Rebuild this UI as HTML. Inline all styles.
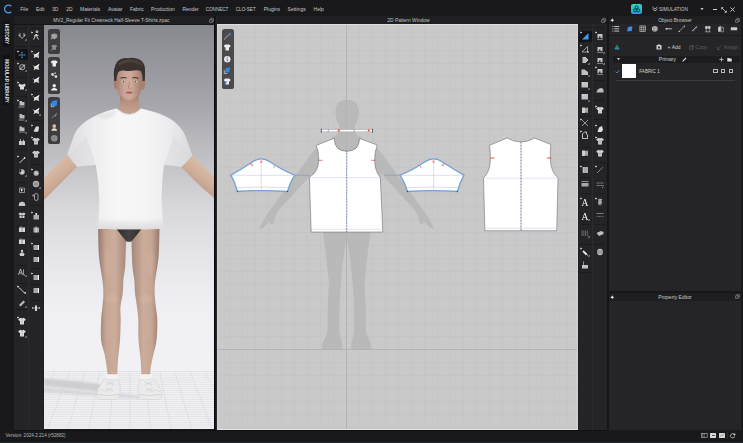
<!DOCTYPE html>
<html><head><meta charset="utf-8">
<style>
*{margin:0;padding:0;box-sizing:border-box}
html,body{width:743px;height:443px;overflow:hidden;background:#19191b;font-family:"Liberation Sans",sans-serif;color:#d8d8d8}
.a{position:absolute}
.t{position:absolute;white-space:nowrap;font-size:5px;line-height:6px;color:#c8c8c8}
svg{position:absolute;overflow:visible}
</style></head><body>
<div class="a" style="left:0;top:0;width:743px;height:16px;background:#19191b"></div>
<svg style="left:3px;top:4px" width="10" height="10" viewBox="0 0 10 10"><path d="M8.3 2.3 A3.9 3.9 0 1 0 8.3 7.7" fill="none" stroke="#4a9de6" stroke-width="1.3"/></svg>
<div class="t" style="left:20.2px;top:6px;font-size:5px;color:#c8c8c8">File</div>
<div class="t" style="left:35.9px;top:6px;font-size:5px;color:#c8c8c8">Edit</div>
<div class="t" style="left:52px;top:6px;font-size:5px;color:#c8c8c8">3D</div>
<div class="t" style="left:66.2px;top:6px;font-size:5px;color:#c8c8c8">2D</div>
<div class="t" style="left:80px;top:6px;font-size:5px;color:#c8c8c8">Materials</div>
<div class="t" style="left:108.1px;top:6px;font-size:5px;color:#c8c8c8">Avatar</div>
<div class="t" style="left:129.9px;top:6px;font-size:5px;color:#c8c8c8">Fabric</div>
<div class="t" style="left:150.9px;top:6px;font-size:5px;color:#c8c8c8">Production</div>
<div class="t" style="left:182.4px;top:6px;font-size:5px;color:#c8c8c8">Render</div>
<div class="t" style="left:205.7px;top:6.75px;font-size:4.6px;color:#c8c8c8">CONNECT</div>
<div class="t" style="left:235.8px;top:6.75px;font-size:4.6px;color:#c8c8c8">CLO-SET</div>
<div class="t" style="left:263.7px;top:6px;font-size:5px;color:#c8c8c8">Plugins</div>
<div class="t" style="left:287.6px;top:6px;font-size:5px;color:#c8c8c8">Settings</div>
<div class="t" style="left:313.6px;top:6px;font-size:5px;color:#c8c8c8">Help</div>
<div class="a" style="left:631px;top:4px;width:11.3px;height:10px;border-radius:2px;background:linear-gradient(#33d9b8,#1c9ee6)"></div>
<svg style="left:631px;top:4px" width="11" height="10" viewBox="0 0 11 10"><g fill="none" stroke="#0d2a3a" stroke-width="0.9"><circle cx="5.6" cy="3.3" r="1.5"/><circle cx="4" cy="6.3" r="1.5"/><circle cx="7.2" cy="6.3" r="1.5"/></g></svg>
<svg style="left:652px;top:6px" width="6" height="6" viewBox="0 0 6 6"><path d="M0.5 1 L3 3 L5.5 1 M0.5 3 L3 5 L5.5 3" fill="none" stroke="#bbb" stroke-width="0.9"/></svg>
<div class="t" style="left:659px;top:6.6px;font-size:4.8px;color:#c8c8c8">SIMULATION</div>
<svg style="left:700px;top:8.2px" width="4" height="3" viewBox="0 0 4 3"><path d="M0.3 0 H3.7 L2 2.3Z" fill="#bbb"/></svg>
<div class="a" style="left:712.5px;top:8.8px;width:4.5px;height:0.9px;background:#d0d0d0"></div>
<svg style="left:721px;top:6.5px" width="6" height="6" viewBox="0 0 6 6"><path d="M0.6 0.6 L5.4 5.4 M0.6 0.6 h1.8 M0.6 0.6 v1.8 M5.4 5.4 h-1.8 M5.4 5.4 v-1.8" fill="none" stroke="#ccc" stroke-width="0.8"/></svg>
<svg style="left:730px;top:7px" width="5" height="5" viewBox="0 0 5 5"><path d="M0.4 0.4 L4.6 4.6 M4.6 0.4 L0.4 4.6" fill="none" stroke="#d0d0d0" stroke-width="0.9"/></svg>
<div class="a" style="left:0;top:16px;width:14px;height:414px;background:#19191b"></div>
<div class="a" style="left:3px;top:21px;width:7px;height:26px;background:#111113"></div>
<div class="a" style="left:3px;top:55px;width:7px;height:50px;background:#111113"></div>
<div class="t" style="left:6.0px;top:34px;font-size:4.6px;line-height:5px;font-weight:bold;transform:translate(-50%,-50%) rotate(90deg);color:#e0e0e0">HISTORY</div>
<div class="t" style="left:6.0px;top:80.5px;font-size:4.6px;line-height:5px;font-weight:bold;transform:translate(-50%,-50%) rotate(90deg) scaleX(0.965);color:#e0e0e0">MODULAR LIBRARY</div>
<div class="a" style="left:14px;top:16px;width:200px;height:8px;background:#1f1f21"></div>
<div class="a" style="left:14px;top:24px;width:200px;height:1px;background:#141416"></div>
<div class="a" style="left:217px;top:23px;width:361px;height:1px;background:#141416"></div>
<div class="t" style="left:53.2px;top:18.2px;font-size:4.9px;color:#c4c4c4">MV2_Regular Fit Crewneck Half-Sleeve T-Shirts.zpac</div>
<svg style="left:208.5px;top:18.2px" width="5" height="5" viewBox="0 0 5 5"><path d="M0.6 1.8 H3.2 V4.4 H0.6Z M1.8 1.8 V0.6 H4.4 V3.2 H3.2" fill="none" stroke="#a8a8a8" stroke-width="0.55"/></svg>
<div class="a" style="left:14px;top:25px;width:30px;height:405px;background:#242427"></div>
<div class="a" style="left:28px;top:25px;width:1px;height:405px;background:#2b2b2d"></div><div class="a" style="left:43px;top:25px;width:1px;height:405px;background:#1e1e20"></div>
<div class="a" style="left:15.5px;top:28px;width:11px;height:0.6px;background:#1b1b1d"></div>
<div class="a" style="left:15.5px;top:46px;width:11px;height:0.6px;background:#1b1b1d"></div>
<div class="a" style="left:15.5px;top:76.8px;width:11px;height:0.6px;background:#1b1b1d"></div>
<div class="a" style="left:15.5px;top:95.8px;width:11px;height:0.6px;background:#1b1b1d"></div>
<div class="a" style="left:15.5px;top:149px;width:11px;height:0.6px;background:#1b1b1d"></div>
<div class="a" style="left:15.5px;top:182px;width:11px;height:0.6px;background:#1b1b1d"></div>
<div class="a" style="left:15.5px;top:265px;width:11px;height:0.6px;background:#1b1b1d"></div>
<div class="a" style="left:15.5px;top:283px;width:11px;height:0.6px;background:#1b1b1d"></div>
<div class="a" style="left:15.5px;top:309px;width:11px;height:0.6px;background:#1b1b1d"></div>
<div class="a" style="left:30.5px;top:28px;width:11px;height:0.6px;background:#1b1b1d"></div>
<div class="a" style="left:30.5px;top:46px;width:11px;height:0.6px;background:#1b1b1d"></div>
<div class="a" style="left:30.5px;top:89.7px;width:11px;height:0.6px;background:#1b1b1d"></div>
<div class="a" style="left:30.5px;top:120.2px;width:11px;height:0.6px;background:#1b1b1d"></div>
<div class="a" style="left:30.5px;top:164px;width:11px;height:0.6px;background:#1b1b1d"></div>
<div class="a" style="left:30.5px;top:205px;width:11px;height:0.6px;background:#1b1b1d"></div>
<div class="a" style="left:30.5px;top:236px;width:11px;height:0.6px;background:#1b1b1d"></div>
<div class="a" style="left:30.5px;top:250px;width:11px;height:0.6px;background:#1b1b1d"></div>
<div class="a" style="left:30.5px;top:268px;width:11px;height:0.6px;background:#1b1b1d"></div>
<div class="a" style="left:30.5px;top:284px;width:11px;height:0.6px;background:#1b1b1d"></div>
<div class="a" style="left:30.5px;top:300px;width:11px;height:0.6px;background:#1b1b1d"></div>
<div class="a" style="left:15.2px;top:49.4px;width:12.6px;height:10.8px;border-radius:1.5px;background:#131315"></div>
<svg style="left:16.50px;top:31.40px;filter:brightness(1.22)" width="10" height="10" viewBox="0 0 10 10"><path d="M3 2 V5 L1.6 4 M7 2 V5 L8.4 4 M1.8 4.2 L5 7.4 L8.2 4.2" fill="none" stroke="#bdbdbd" stroke-width="0.7"/><path d="M9.5 8 V9.5 H8 Z" fill="#d0d0d0"/></svg>
<svg style="left:16.50px;top:49.50px;filter:brightness(1.22)" width="10" height="10" viewBox="0 0 10 10"><path d="M5 2 V8 M2 5 H8" stroke="#3a8fe0" stroke-width="0.6"/><path d="M5 1.4 L4.2 2.4 H5.8Z M5 8.6 L4.2 7.6 H5.8Z M1.4 5 L2.4 4.2 V5.8Z M8.6 5 L7.6 4.2 V5.8Z" fill="#3a8fe0"/><path d="M0.4 0.4 L2.2 1.4 L0.4 2.4 Z" fill="#e0e0e0"/></svg>
<svg style="left:16.50px;top:62.00px;filter:brightness(1.22)" width="10" height="10" viewBox="0 0 10 10"><circle cx="5.2" cy="5.2" r="2.6" fill="none" stroke="#bbb" stroke-width="0.7"/><path d="M3 7.5 L8 2.5" stroke="#ddd" stroke-width="0.8"/><path d="M0.4 0.4 L2.2 1.4 L0.4 2.4 Z" fill="#e0e0e0"/><path d="M9.5 8 V9.5 H8 Z" fill="#d0d0d0"/></svg>
<svg style="left:16.50px;top:81.30px;filter:brightness(1.22)" width="10" height="10" viewBox="0 0 10 10"><path d="M2 2.5 L4 3.5 H6 L8 2.5 L8.5 5 L7 6 V8.5 H3 V6 L1.5 5 Z" fill="#b4b4b4"/><path d="M0.4 0.4 L2.2 1.4 L0.4 2.4 Z" fill="#e0e0e0"/><path d="M9.5 8 V9.5 H8 Z" fill="#d0d0d0"/></svg>
<svg style="left:16.50px;top:98.90px;filter:brightness(1.22)" width="10" height="10" viewBox="0 0 10 10"><path d="M2.5 2 H5 V3 H7.5 V6.5 H2.5 Z" fill="#9a9a9a"/><path d="M1.5 8 H7.5" stroke="#ddd" stroke-width="0.5"/><path d="M0.4 0.4 L2.2 1.4 L0.4 2.4 Z" fill="#e0e0e0"/></svg>
<svg style="left:16.50px;top:111.80px;filter:brightness(1.22)" width="10" height="10" viewBox="0 0 10 10"><path d="M2.5 2 H5 V3 H7.5 V6.5 H2.5 Z" fill="#9a9a9a"/><path d="M1.5 8 H7.5" stroke="#ddd" stroke-width="0.5"/><path d="M9.5 8 V9.5 H8 Z" fill="#d0d0d0"/></svg>
<svg style="left:16.50px;top:123.70px;filter:brightness(1.22)" width="10" height="10" viewBox="0 0 10 10"><path d="M2.5 2.5 H5 V3.5 H7.5 V7 H2.5 Z" fill="#9a9a9a"/><path d="M2 8 H8" stroke="#ccc" stroke-width="0.5"/><path d="M9.5 8 V9.5 H8 Z" fill="#d0d0d0"/></svg>
<svg style="left:16.50px;top:137.00px;filter:brightness(1.22)" width="10" height="10" viewBox="0 0 10 10"><path d="M2 4 H8 V8 H2Z" fill="#aaa"/><path d="M3.5 2 V4 M6.5 2.5 V4" stroke="#ccc" stroke-width="0.6"/><path d="M5 4 V8" stroke="#555" stroke-width="0.5"/></svg>
<svg style="left:16.50px;top:154.80px;filter:brightness(1.22)" width="10" height="10" viewBox="0 0 10 10"><path d="M2.5 8 L7.5 3" stroke="#ccc" stroke-width="0.8"/><circle cx="7.6" cy="2.9" r="0.8" fill="#ddd"/><path d="M0.4 0.4 L2.2 1.4 L0.4 2.4 Z" fill="#e0e0e0"/></svg>
<svg style="left:16.50px;top:166.80px;filter:brightness(1.22)" width="10" height="10" viewBox="0 0 10 10"><circle cx="5" cy="5" r="2.7" fill="#999"/><path d="M2.5 3 L6 6" stroke="#ddd" stroke-width="0.9"/><circle cx="3.3" cy="4" r="1.2" fill="#222"/><path d="M9.5 8 V9.5 H8 Z" fill="#d0d0d0"/></svg>
<svg style="left:16.50px;top:185.00px;filter:brightness(1.22)" width="10" height="10" viewBox="0 0 10 10"><path d="M2.5 3 H7.5 V7.5 H2.5Z" fill="none" stroke="#aaa" stroke-width="0.6"/><path d="M3.5 3.5 L6.5 5 L5 5.5 L4.5 7Z" fill="#ddd"/></svg>
<svg style="left:16.50px;top:198.00px;filter:brightness(1.22)" width="10" height="10" viewBox="0 0 10 10"><path d="M1.5 8 H8.5 L7.5 4.5 L5 3.5 L2.5 4.5 Z" fill="#9d9d9d"/><path d="M2 6.2 H8" stroke="#ccc" stroke-width="0.4"/></svg>
<svg style="left:16.50px;top:209.60px;filter:brightness(1.22)" width="10" height="10" viewBox="0 0 10 10"><path d="M1.5 3.5 L3.5 2.5 L5 3.5 L6.5 2.5 L8.5 3.5 L7.5 5 H2.5Z M2.5 5.5 H4.7 V8 H2.5Z M5.3 5.5 H7.5 V8 H5.3Z" fill="#a8a8a8"/></svg>
<svg style="left:16.50px;top:223.80px;filter:brightness(1.22)" width="10" height="10" viewBox="0 0 10 10"><path d="M2 3.5 H8 V8 H2Z" fill="#b0b0b0"/><path d="M5 3.5 V8" stroke="#444" stroke-width="0.5"/><path d="M4 2 V3.5" stroke="#ccc" stroke-width="0.5"/></svg>
<svg style="left:16.50px;top:236.00px;filter:brightness(1.22)" width="10" height="10" viewBox="0 0 10 10"><path d="M2 3.5 H8 V8 H2Z" fill="#b0b0b0"/><path d="M5 3.5 V8" stroke="#444" stroke-width="0.5"/><path d="M4 2 V3.5" stroke="#ccc" stroke-width="0.5"/></svg>
<svg style="left:16.50px;top:247.60px;filter:brightness(1.22)" width="10" height="10" viewBox="0 0 10 10"><circle cx="5" cy="3" r="1.2" fill="#a8a8a8"/><path d="M1.5 7 L4 4.5 H6 L8.5 7 L7 6.5 V8 H3 V6.5Z" fill="#a8a8a8"/></svg>
<svg style="left:16.50px;top:267.30px;filter:brightness(1.22)" width="10" height="10" viewBox="0 0 10 10"><path d="M1.5 8 L3.5 2 L5.5 8 M2.3 6 H4.7" fill="none" stroke="#aaa" stroke-width="0.8"/><path d="M6.5 2.5 V7.5 Q6.5 8.5 8 8" fill="none" stroke="#aaa" stroke-width="0.7"/><path d="M9.5 8 V9.5 H8 Z" fill="#d0d0d0"/></svg>
<svg style="left:16.50px;top:284.50px;filter:brightness(1.22)" width="10" height="10" viewBox="0 0 10 10"><path d="M1.5 2.5 Q5 4.5 5.5 6 Q6 7.5 8.5 8" fill="none" stroke="#bbb" stroke-width="0.8"/><circle cx="8.3" cy="8" r="0.8" fill="#ccc"/><path d="M0.4 0.4 L2.2 1.4 L0.4 2.4 Z" fill="#e0e0e0"/></svg>
<svg style="left:16.50px;top:298.00px;filter:brightness(1.22)" width="10" height="10" viewBox="0 0 10 10"><path d="M2 7 L6.5 2.5 L8 4 L3.5 8.5Z" fill="#9a9a9a"/><path d="M9.5 8 V9.5 H8 Z" fill="#d0d0d0"/></svg>
<svg style="left:16.50px;top:315.50px;filter:brightness(1.22)" width="10" height="10" viewBox="0 0 10 10"><path d="M1.2 3.2 L3.5 1.8 Q5 2.8 6.5 1.8 L8.8 3.2 L7.8 5 L7 4.6 V8.5 H3 V4.6 L2.2 5Z" fill="#b5b5b5"/><path d="M5 3 V8.5" stroke="#777" stroke-width="0.4"/><path d="M0.4 0.4 L2.2 1.4 L0.4 2.4 Z" fill="#e0e0e0"/></svg>
<svg style="left:16.50px;top:328.40px;filter:brightness(1.22)" width="10" height="10" viewBox="0 0 10 10"><path d="M1.2 3.2 L3.5 1.8 Q5 2.8 6.5 1.8 L8.8 3.2 L7.8 5 L7 4.6 V8.5 H3 V4.6 L2.2 5Z" fill="#b5b5b5"/><path d="M5 3 V8.5" stroke="#777" stroke-width="0.4"/><path d="M9.5 8 V9.5 H8 Z" fill="#d0d0d0"/></svg>
<svg style="left:31.30px;top:31.40px;filter:brightness(1.22)" width="10" height="10" viewBox="0 0 10 10"><path d="M6 1.5 a0.9 0.9 0 1 1 0.01 0Z M5.5 3 L4 5.5 L2.5 8.5 M5.5 3 L6 6 L7.5 8.5 M4.5 4 L7.5 4.5 M5 4 L3 5" fill="none" stroke="#b8b8b8" stroke-width="0.9"/><path d="M0.4 0.4 L2.2 1.4 L0.4 2.4 Z" fill="#e0e0e0"/></svg>
<svg style="left:31.30px;top:49.50px;filter:brightness(1.22)" width="10" height="10" viewBox="0 0 10 10"><path d="M1.5 3 L4 4.5 L8.5 1.8 L7.5 5 L8.2 8 L5 7 L2.5 8.2 L3.5 5.5 Z" fill="#b0b0b0"/><path d="M3 6 L8 2.5" stroke="#eee" stroke-width="0.6"/><path d="M0.4 0.4 L2.2 1.4 L0.4 2.4 Z" fill="#e0e0e0"/></svg>
<svg style="left:31.30px;top:62.00px;filter:brightness(1.22)" width="10" height="10" viewBox="0 0 10 10"><path d="M1.5 3 L4 4.5 L8.5 1.8 L7.5 5 L8.2 8 L5 7 L2.5 8.2 L3.5 5.5 Z" fill="#b0b0b0"/><path d="M3 6 L8 2.5" stroke="#eee" stroke-width="0.6"/></svg>
<svg style="left:31.30px;top:74.50px;filter:brightness(1.22)" width="10" height="10" viewBox="0 0 10 10"><path d="M1.5 3 L4 4.5 L8.5 1.8 L7.5 5 L8.2 8 L5 7 L2.5 8.2 L3.5 5.5 Z" fill="#b0b0b0"/><path d="M3 6 L8 2.5" stroke="#eee" stroke-width="0.6"/></svg>
<svg style="left:31.30px;top:92.80px;filter:brightness(1.22)" width="10" height="10" viewBox="0 0 10 10"><path d="M1.5 3 L4 4.5 L8.5 1.8 L7.5 5 L8.2 8 L5 7 L2.5 8.2 L3.5 5.5 Z" fill="#b0b0b0"/><path d="M3 6 L8 2.5" stroke="#eee" stroke-width="0.6"/><path d="M0.4 0.4 L2.2 1.4 L0.4 2.4 Z" fill="#e0e0e0"/></svg>
<svg style="left:31.30px;top:105.70px;filter:brightness(1.22)" width="10" height="10" viewBox="0 0 10 10"><path d="M1.5 3 L4 4.5 L8.5 1.8 L7.5 5 L8.2 8 L5 7 L2.5 8.2 L3.5 5.5 Z" fill="#b0b0b0"/><path d="M3 6 L8 2.5" stroke="#eee" stroke-width="0.6"/><path d="M9.5 8 V9.5 H8 Z" fill="#d0d0d0"/></svg>
<svg style="left:31.30px;top:123.50px;filter:brightness(1.22)" width="10" height="10" viewBox="0 0 10 10"><path d="M2.5 7.5 L5 2.5 L8 2.5 L7.5 7 L6 8 Z" fill="#b0b0b0"/><path d="M0.4 0.4 L2.2 1.4 L0.4 2.4 Z" fill="#e0e0e0"/></svg>
<svg style="left:31.30px;top:136.30px;filter:brightness(1.22)" width="10" height="10" viewBox="0 0 10 10"><path d="M1.2 3.2 L3.5 1.8 Q5 2.8 6.5 1.8 L8.8 3.2 L7.8 5 L7 4.6 V8.5 H3 V4.6 L2.2 5Z" fill="#a9a9a9"/><path d="M3 4.5 L7 7.5 M7 4.5 L3 7.5" stroke="#777" stroke-width="0.5"/><path d="M0.4 0.4 L2.2 1.4 L0.4 2.4 Z" fill="#e0e0e0"/></svg>
<svg style="left:31.30px;top:148.50px;filter:brightness(1.22)" width="10" height="10" viewBox="0 0 10 10"><path d="M1.2 3.2 L3.5 1.8 Q5 2.8 6.5 1.8 L8.8 3.2 L7.8 5 L7 4.6 V8.5 H3 V4.6 L2.2 5Z" fill="#a9a9a9"/><path d="M3 4.5 L7 7.5 M7 4.5 L3 7.5" stroke="#777" stroke-width="0.5"/></svg>
<svg style="left:31.30px;top:167.50px;filter:brightness(1.22)" width="10" height="10" viewBox="0 0 10 10"><circle cx="5.2" cy="5.2" r="2.6" fill="#8a8a8a"/><circle cx="5.2" cy="5.2" r="1.2" fill="#aaa"/><path d="M0.4 0.4 L2.2 1.4 L0.4 2.4 Z" fill="#e0e0e0"/></svg>
<svg style="left:31.30px;top:179.00px;filter:brightness(1.22)" width="10" height="10" viewBox="0 0 10 10"><circle cx="5" cy="5" r="3.2" fill="#8f8f8f"/><path d="M3 4.2 H7 M3 5.8 H7" stroke="#444" stroke-width="0.5"/><path d="M9.5 8 V9.5 H8 Z" fill="#d0d0d0"/></svg>
<svg style="left:31.30px;top:192.00px;filter:brightness(1.22)" width="10" height="10" viewBox="0 0 10 10"><rect x="3.5" y="1.5" width="3.5" height="7" rx="1.6" fill="none" stroke="#aaa" stroke-width="0.7"/><circle cx="2.2" cy="3.5" r="0.9" fill="#888"/></svg>
<svg style="left:31.30px;top:210.50px;filter:brightness(1.22)" width="10" height="10" viewBox="0 0 10 10"><path d="M2.5 4 H8 V8.5 H2.5Z" fill="#8f8f8f"/><circle cx="5.2" cy="3" r="1" fill="#ccc"/><path d="M0.4 0.4 L2.2 1.4 L0.4 2.4 Z" fill="#e0e0e0"/></svg>
<svg style="left:31.30px;top:223.50px;filter:brightness(1.22)" width="10" height="10" viewBox="0 0 10 10"><path d="M2.5 3.5 H8 V8.5 H2.5Z" fill="#8f8f8f"/><path d="M5.2 2 V8.5" stroke="#ddd" stroke-width="0.8" stroke-dasharray="0.6 0.4"/></svg>
<svg style="left:31.30px;top:241.50px;filter:brightness(1.22)" width="10" height="10" viewBox="0 0 10 10"><path d="M2.5 3 H7 V8 H2.5Z" fill="#8a8a8a"/><path d="M7 3 H8 V8 H7Z" fill="#d0d0d0"/><path d="M0.4 0.4 L2.2 1.4 L0.4 2.4 Z" fill="#e0e0e0"/></svg>
<svg style="left:31.30px;top:253.70px;filter:brightness(1.22)" width="10" height="10" viewBox="0 0 10 10"><path d="M2.5 3 H7 V8 H2.5Z" fill="#8a8a8a"/><path d="M7 3 H8 V8 H7Z" fill="#d0d0d0"/></svg>
<svg style="left:31.30px;top:272.00px;filter:brightness(1.22)" width="10" height="10" viewBox="0 0 10 10"><path d="M2.5 3 H7 V8 H2.5Z" fill="#8a8a8a"/><path d="M7 3 H8 V8 H7Z" fill="#d0d0d0"/><path d="M0.4 0.4 L2.2 1.4 L0.4 2.4 Z" fill="#e0e0e0"/></svg>
<svg style="left:31.30px;top:285.00px;filter:brightness(1.22)" width="10" height="10" viewBox="0 0 10 10"><path d="M2.5 3 H7 V8 H2.5Z" fill="#8a8a8a"/><path d="M7 3 H8 V8 H7Z" fill="#d0d0d0"/></svg>
<svg style="left:31.30px;top:303.30px;filter:brightness(1.22)" width="10" height="10" viewBox="0 0 10 10"><path d="M4 2.5 H6 V8 H4Z" fill="#aaa"/><path d="M1 5 H9 M1 5 L2.2 4.2 M1 5 L2.2 5.8 M9 5 L7.8 4.2 M9 5 L7.8 5.8" stroke="#ddd" stroke-width="0.5" fill="none"/></svg>
<div class="a" style="left:44px;top:25px;width:170px;height:404px;overflow:hidden;background:linear-gradient(180deg,#88898e 0%,#909196 5.4%,#a5a5ab 19.3%,#bbbbc0 30.4%,#d8d8dc 45.3%,#e4e4e8 55.7%,#f0f0f4 70%,#f3f3f6 100%)">
<svg style="left:0;top:0" width="170" height="404" viewBox="44 25 170 404"><defs>
<linearGradient id="armL" x1="0" y1="0" x2="0.6" y2="1"><stop offset="0" stop-color="#e2c7b2"/><stop offset="0.5" stop-color="#d2b29c"/><stop offset="1" stop-color="#ae8f7e"/></linearGradient>
<linearGradient id="armR" x1="1" y1="0" x2="0.4" y2="1"><stop offset="0" stop-color="#e2c7b2"/><stop offset="0.5" stop-color="#d2b29c"/><stop offset="1" stop-color="#ae8f7e"/></linearGradient>
<linearGradient id="legL" x1="0" y1="0" x2="1" y2="0"><stop offset="0" stop-color="#977a6e"/><stop offset="0.25" stop-color="#c4a493"/><stop offset="0.55" stop-color="#ccad9b"/><stop offset="1" stop-color="#a08275"/></linearGradient>
<linearGradient id="legR" x1="1" y1="0" x2="0" y2="0"><stop offset="0" stop-color="#977a6e"/><stop offset="0.25" stop-color="#c4a493"/><stop offset="0.55" stop-color="#ccad9b"/><stop offset="1" stop-color="#a08275"/></linearGradient>
<linearGradient id="face" x1="0" y1="0" x2="1" y2="0"><stop offset="0" stop-color="#a68070"/><stop offset="0.3" stop-color="#caa496"/><stop offset="0.55" stop-color="#cfa99a"/><stop offset="1" stop-color="#9e7a6c"/></linearGradient>
<linearGradient id="neck" x1="0" y1="0" x2="0" y2="1"><stop offset="0" stop-color="#8f6e60"/><stop offset="0.45" stop-color="#b89282"/><stop offset="1" stop-color="#c8a494"/></linearGradient>
<linearGradient id="shirt" x1="0" y1="0" x2="1" y2="0"><stop offset="0" stop-color="#dcdcde"/><stop offset="0.2" stop-color="#ededef"/><stop offset="0.4" stop-color="#f7f7f7"/><stop offset="0.62" stop-color="#f5f5f5"/><stop offset="0.82" stop-color="#ebebed"/><stop offset="1" stop-color="#d8d8da"/></linearGradient>
<linearGradient id="uw" x1="0" y1="0" x2="1" y2="0"><stop offset="0" stop-color="#2e2b2b"/><stop offset="0.5" stop-color="#464242"/><stop offset="1" stop-color="#2e2b2b"/></linearGradient>
<filter id="bl" x="-20%" y="-50%" width="140%" height="200%"><feGaussianBlur stdDeviation="1.2"/></filter><linearGradient id="hem" x1="0" y1="0" x2="0" y2="1"><stop offset="0" stop-color="#d6d6d8" stop-opacity="0"/><stop offset="1" stop-color="#d6d6d8" stop-opacity="0.8"/></linearGradient></defs><rect x="44" y="371" width="170" height="59" fill="#f3f3f6"/><path d="M44 371.50H214 M44 373.64H214 M44 375.78H214 M44 377.92H214 M44 380.06H214 M44 382.20H214 M44 384.34H214 M44 386.48H214 M44 388.62H214 M44 390.76H214 M44 392.90H214 M44 395.04H214 M44 397.18H214 M44 399.32H214 M44 401.46H214 M44 403.60H214 M44 405.74H214 M44 407.88H214 M44 410.02H214 M44 412.16H214 M44 414.30H214 M44 416.44H214 M44 418.58H214 M44 420.72H214 M44 422.86H214 M44 425.00H214 M44 427.14H214 M44 429.28H214 M24.80 371.2L-15.10 430 M39.80 371.2L5.60 430 M54.80 371.2L26.30 430 M69.80 371.2L47.00 430 M84.80 371.2L67.70 430 M99.80 371.2L88.40 430 M114.80 371.2L109.10 430 M129.80 371.2L129.80 430 M144.80 371.2L150.50 430 M159.80 371.2L171.20 430 M174.80 371.2L191.90 430 M189.80 371.2L212.60 430 M204.80 371.2L233.30 430 M219.80 371.2L254.00 430" stroke="#d7d7dd" stroke-width="0.6" fill="none"/><path d="M44 378.5 Q72 380 100 384 L103 392 Q75 389 44 386Z" fill="#c9c9ce" opacity="0.85" filter="url(#bl)"/><path d="M44 387.5 Q75 390 100 393 L100 396 Q72 394 44 392.5Z" fill="#d0d0d5" opacity="0.8" filter="url(#bl)"/><path d="M118 393 Q130 394 140 396 L140 399 Q128 398 118 398Z" fill="#d3d3d8" opacity="0.8" filter="url(#bl)"/><path d="M67.2 154.5 L77.1 166.8 Q62 182 44 200 L44 178.3 Q55 166 67.2 154.5Z" fill="url(#armL)"/><path d="M192.4 155.5 L181.3 167 Q196 183 214 198 L214 177 Q203 166 192.4 155.5Z" fill="url(#armR)"/><path d="M120.5 92 Q120 103 118 109.5 Q129.4 120 140 109.5 Q138.5 103 138.5 92Z" fill="url(#neck)"/><path d="M98.10 229.00 C98.25 233.67 98.28 248.50 99.00 257.00 C99.72 265.50 101.67 274.00 102.40 280.00 C103.13 286.00 103.40 288.50 103.40 293.00 C103.40 297.50 102.78 302.50 102.40 307.00 C102.02 311.50 101.32 314.50 101.10 320.00 C100.88 325.50 100.53 334.33 101.10 340.00 C101.67 345.67 103.60 349.67 104.50 354.00 C105.40 358.33 105.95 362.33 106.50 366.00 C107.05 369.67 107.58 374.33 107.80 376.00 L117.10 376.00 C117.25 373.27 117.52 365.60 118.00 359.60 C118.48 353.60 119.55 346.60 120.00 340.00 C120.45 333.40 120.62 325.50 120.70 320.00 C120.78 314.50 120.15 311.50 120.50 307.00 C120.85 302.50 122.32 297.50 122.80 293.00 C123.28 288.50 123.00 284.50 123.40 280.00 C123.80 275.50 124.75 272.38 125.20 266.00 C125.65 259.62 125.95 245.75 126.10 241.70 L128.5 229Z" fill="url(#legL)"/><path d="M159.50 229.00 C159.35 233.67 159.32 248.50 158.60 257.00 C157.88 265.50 155.87 274.00 155.20 280.00 C154.53 286.00 154.48 288.50 154.60 293.00 C154.72 297.50 155.45 302.50 155.90 307.00 C156.35 311.50 157.18 314.50 157.30 320.00 C157.42 325.50 157.23 334.33 156.60 340.00 C155.97 345.67 154.43 349.67 153.50 354.00 C152.57 358.33 151.58 362.33 151.00 366.00 C150.42 369.67 150.17 374.33 150.00 376.00 L141.50 376.00 C141.35 373.27 141.10 365.60 140.60 359.60 C140.10 353.60 138.88 346.60 138.50 340.00 C138.12 333.40 138.55 325.50 138.30 320.00 C138.05 314.50 137.55 311.50 137.00 307.00 C136.45 302.50 135.45 297.50 135.00 293.00 C134.55 288.50 134.73 284.50 134.30 280.00 C133.87 275.50 132.87 272.38 132.40 266.00 C131.93 259.62 131.65 245.75 131.50 241.70 L130 229Z" fill="url(#legR)"/><ellipse cx="112.5" cy="299" rx="5.5" ry="5" fill="#d6b8a4" opacity="0.45" filter="url(#bl)"/><ellipse cx="145.5" cy="299" rx="5.5" ry="5" fill="#d6b8a4" opacity="0.45" filter="url(#bl)"/><ellipse cx="108" cy="262" rx="4" ry="14" fill="#d4b4a0" opacity="0.35" filter="url(#bl)"/><ellipse cx="150" cy="262" rx="4" ry="14" fill="#d4b4a0" opacity="0.35" filter="url(#bl)"/><ellipse cx="109" cy="330" rx="3.5" ry="11" fill="#d0b09c" opacity="0.35" filter="url(#bl)"/><ellipse cx="148" cy="330" rx="3.5" ry="11" fill="#d0b09c" opacity="0.35" filter="url(#bl)"/><path d="M115 227 L143 227 Q137 235 131.6 241.3 Q128.9 242.4 126.2 241.3 Q121 235 115 227Z" fill="url(#uw)"/><path d="M105.8 374.3 H117.6 L118.6 381 H105Z M140.4 374.3 H151.8 L152.6 381 H139.6Z" fill="#f2f2f2"/><path d="M104.5 379 Q111 381 118.8 379.5 Q120.5 385 120.2 392 Q120 398.5 116 399.5 L101 399.5 Q96.5 399 96.3 395 Q96.5 390 100 385.5 Z" fill="#ebebeb" stroke="#cdcdcd" stroke-width="0.5"/><g transform="translate(258.3 0) scale(-1 1)"><path d="M104.5 379 Q111 381 118.8 379.5 Q120.5 385 120.2 392 Q120 398.5 116 399.5 L101 399.5 Q96.5 399 96.3 395 Q96.5 390 100 385.5 Z" fill="#ebebeb" stroke="#cdcdcd" stroke-width="0.5"/></g><path d="M97 394.5 Q108 396.5 120 394.5 M138.3 394.5 Q150.3 396.5 161.3 394.5" stroke="#d2d2d2" stroke-width="0.9" fill="none"/><path d="M106 382 L114 385 M106.5 385 L113.5 382 M105.5 388 L113 391 M106 391 L112.5 388 M144.3 385 L152.3 382 M144.8 382 L151.8 385 M145.3 391 L152.8 388 M145.8 388 L152.3 391" stroke="#c6c6c6" stroke-width="0.55"/><path d="M98 392 Q103 388 108 392.5 M150 392.5 Q155 388 160.3 392" stroke="#d8d8d8" stroke-width="0.8" fill="none"/><path d="M116.7 108.5 Q129.4 119.5 141.1 108.5 C157 112 170 117 177.5 124.5 C183 130 185.5 135 187.2 141 L192.6 155.6 Q187 162 181.3 167 Q172 165 164 165 Q161.5 182 161.6 200 L163.3 228.7 Q130 230 98.2 228.7 L99.3 200 Q99 182 95.8 165 Q87 165 77.1 166.8 Q71 161 67.2 154.1 L73 138.5 C74.5 133 77 128.5 82.5 124 C90 117.5 103 111.5 116.7 108.5Z" fill="url(#shirt)"/><path d="M98.6 218 Q130 219.5 163 218 L163.3 228.7 Q130 230 98.2 228.7Z" fill="url(#hem)"/><path d="M116.9 109 Q129.4 120.5 140.9 109" stroke="#dcdcde" stroke-width="1" fill="none"/><path d="M105 113 Q112 112 117 110 Q114 117 106 119 Q100 118 96 116Z" fill="#dadadc" opacity="0.6" filter="url(#bl)"/><path d="M69 156 Q78 146 86 136 Q92 152 95.5 165 L77 166.5Z M191 156.5 Q182 146 174 136 Q168 152 164.2 165 L181.5 166.8Z" fill="#d9d9db" opacity="0.5"/><path d="M67.5 154.5 L77 166.5 M192.2 155.8 L181.5 166.7" stroke="#cfcfd2" stroke-width="0.8"/><path d="M114 79 Q112.8 85 115.2 89.5 L117.2 89 L117 79Z M145 79 Q146.2 85 143.8 89.5 L141.8 89 L142 79Z" fill="#a98070"/><path d="M116.4 72 Q116 87 118.5 93.5 Q122.5 100 129.3 101.2 Q136 100 140.2 93.5 Q142.8 87 142.6 72 Q141 64 129.5 63.5 Q118 64 116.4 72Z" fill="url(#face)"/><path d="M118.5 93.5 Q122.5 100 129.3 101.2 Q136 100 140.2 93.5 Q136 98.5 129.3 99.8 Q122.5 98.5 118.5 93.5Z" fill="#a07868" opacity="0.35"/><path d="M114.3 81 Q112.5 68 117 62 Q121 57.5 128 58.2 Q134 57 139.5 59.5 Q145 62.5 145 70 Q145.3 76 144.7 81 L142.7 81 Q142.6 75 141.2 71.5 Q138.5 69.5 133 70.5 Q128 71.5 124 70.5 Q119.5 70 118 72.5 Q116.5 76 116.3 81Z" fill="#38312d"/><path d="M118.5 63 Q125 58 134 59.5 Q141 61 143 66 Q136 62 128 62.5 Q122 63.5 118.5 66Z" fill="#4e463e" opacity="0.8"/><path d="M120.6 78.3 Q123.5 77 126.6 78 M132.4 78 Q135.5 77 138.4 78.3" stroke="#3e3430" stroke-width="1.1" fill="none"/><ellipse cx="123.4" cy="81.6" rx="2" ry="0.9" fill="#ddd0c8"/><ellipse cx="135.6" cy="81.6" rx="2" ry="0.9" fill="#ddd0c8"/><circle cx="123.6" cy="81.6" r="0.85" fill="#4e5660"/><circle cx="135.4" cy="81.6" r="0.85" fill="#4e5660"/><path d="M129.4 82.5 L128.4 88 Q129.5 89.4 131 88.4" stroke="#9c7866" stroke-width="0.7" fill="none"/><path d="M125.6 92.4 Q127.5 91.2 129.3 91.8 Q131.1 91.2 133 92.4 Q129.3 95.2 125.6 92.4Z" fill="#a85c60"/></svg>
</div>
<div class="a" style="left:48.3px;top:28.5px;width:11.7px;height:25.8px;border-radius:2.6px;background:#3d3d40"></div>
<div class="a" style="left:48.3px;top:57px;width:11.7px;height:36.7px;border-radius:2.6px;background:#3d3d40"></div>
<div class="a" style="left:48.3px;top:96.8px;width:11.7px;height:47.2px;border-radius:2.6px;background:#3d3d40"></div>
<svg style="left:49.85px;top:32.05px" width="8.5" height="8.5" viewBox="0 0 10 10"><path d="M5 1.5 L8.5 3.2 V6.8 L5 8.5 L1.5 6.8 V3.2Z" fill="#9a9a9a"/><path d="M1.5 3.2 L5 5 L8.5 3.2 M5 5 V8.5" stroke="#c8c8c8" stroke-width="0.5" fill="none"/><path d="M1 8.5 L3 7" stroke="#ddd" stroke-width="0.8"/></svg>
<svg style="left:49.85px;top:42.55px" width="8.5" height="8.5" viewBox="0 0 10 10"><path d="M1.5 3.5 L3.5 2.2 Q5 3 6.5 2.2 L8.5 3.5 L7.5 5 L7 4.8 V8 H3 V4.8 L2.5 5Z" fill="#8f8f8f"/><path d="M1 8.5 L3 7" stroke="#bbb" stroke-width="0.8"/></svg>
<svg style="left:49.85px;top:59.15px" width="8.5" height="8.5" viewBox="0 0 10 10"><path d="M1 3.2 L3.5 1.6 Q5 2.6 6.5 1.6 L9 3.2 L8 5.2 L7 4.8 V8.8 H3 V4.8 L2 5.2Z" fill="#f0f0f0"/></svg>
<svg style="left:49.85px;top:71.25px" width="8.5" height="8.5" viewBox="0 0 10 10"><circle cx="3" cy="4" r="1.6" fill="#e0e0e0"/><circle cx="7" cy="6.5" r="1.6" fill="#e0e0e0"/><circle cx="6" cy="2.5" r="1" fill="#bbb"/><path d="M3 4 L7 6.5" stroke="#ccc" stroke-width="0.7"/></svg>
<svg style="left:49.85px;top:82.55px" width="8.5" height="8.5" viewBox="0 0 10 10"><circle cx="5" cy="3.3" r="2" fill="#f0f0f0"/><path d="M1.2 8.8 Q1.5 5.8 5 5.8 Q8.5 5.8 8.8 8.8Z" fill="#f0f0f0"/></svg>
<svg style="left:49.85px;top:99.25px" width="8.5" height="8.5" viewBox="0 0 10 10"><path d="M2 3 Q5 1.5 8.5 1.5 L8 7.5 Q5 8.5 2 8.5Z" fill="#2f8ae0"/><path d="M1.5 5 V9 H5" stroke="#ddd" stroke-width="0.8" fill="none"/></svg>
<svg style="left:49.85px;top:110.95px" width="8.5" height="8.5" viewBox="0 0 10 10"><path d="M2 8.5 L8.5 1.5 L6.5 7 L5 5.5Z" fill="#8a8a8a"/><path d="M2 8.5 L5 5.5" stroke="#ccc" stroke-width="0.5"/></svg>
<svg style="left:49.85px;top:122.75px" width="8.5" height="8.5" viewBox="0 0 10 10"><circle cx="5" cy="3.6" r="2.2" fill="#e8b890"/><path d="M1.5 9 Q2 6.3 5 6.3 Q8 6.3 8.5 9Z" fill="#f0e0c8"/></svg>
<svg style="left:49.85px;top:133.95px" width="8.5" height="8.5" viewBox="0 0 10 10"><circle cx="5" cy="5" r="3.6" fill="#8a8a8a"/><circle cx="5" cy="5" r="3.6" fill="none" stroke="#aaa" stroke-width="0.5"/><path d="M5 1.4 V8.6 M1.4 5 H8.6" stroke="#777" stroke-width="0.4"/></svg>
<div class="a" style="left:214px;top:16px;width:3px;height:414px;background:linear-gradient(90deg,#0a0a0b 0,#0a0a0b 1px,#18181a 1px,#18181a 2px,#262628 2px)"></div>
<div class="a" style="left:217px;top:16px;width:390px;height:8px;background:#1f1f21"></div>
<div class="t" style="left:387.3px;top:18.2px;font-size:4.9px;color:#c4c4c4">2D Pattern Window</div>
<svg style="left:600.8px;top:18.2px" width="5" height="5" viewBox="0 0 5 5"><path d="M0.6 1.8 H3.2 V4.4 H0.6Z M1.8 1.8 V0.6 H4.4 V3.2 H3.2" fill="none" stroke="#a8a8a8" stroke-width="0.55"/></svg>
<div class="a" style="left:217px;top:24px;width:361px;height:406px;background:#c9c9c9"></div>
<svg style="left:217px;top:24px" width="361" height="406" viewBox="217 24 361 406"><path d="M229.5 24V430 M242.5 24V430 M255.5 24V430 M268.5 24V430 M281.5 24V430 M294.5 24V430 M307.5 24V430 M320.5 24V430 M333.5 24V430 M359.5 24V430 M372.5 24V430 M385.5 24V430 M398.5 24V430 M411.5 24V430 M424.5 24V430 M437.5 24V430 M450.5 24V430 M463.5 24V430 M476.5 24V430 M489.5 24V430 M502.5 24V430 M515.5 24V430 M528.5 24V430 M541.5 24V430 M554.5 24V430 M567.5 24V430 M217 37.5H578 M217 50.5H578 M217 63.5H578 M217 76.5H578 M217 89.5H578 M217 102.5H578 M217 115.5H578 M217 128.5H578 M217 141.5H578 M217 154.5H578 M217 167.5H578 M217 180.5H578 M217 193.5H578 M217 206.5H578 M217 219.5H578 M217 232.5H578 M217 245.5H578 M217 258.5H578 M217 271.5H578 M217 284.5H578 M217 297.5H578 M217 310.5H578 M217 323.5H578 M217 336.5H578 M217 362.5H578 M217 375.5H578 M217 388.5H578 M217 401.5H578 M217 414.5H578 M217 427.5H578" stroke="#c5c5c5" stroke-width="1"/><g fill="#b9b9b9"><path d="M335.5 112 Q335.3 100 347 100 Q358.8 100 358.8 112 Q358.8 120 355.5 124 L338.5 124 Q335.5 120 335.5 112Z"/><path d="M338 118 Q339.5 126 338.8 132 Q337 135.5 331 138 L331 142 L362.5 142 L362.5 138 Q356.5 135.5 355 132 Q354.2 126 355.8 118Z"/><path d="M317.5 147 L334.5 140 L359.5 140 L376 147 Q381 150 382 160 L381 178 L381 232 L312 232 L312 178 L311 160 Q312 150 317.5 147Z"/><path d="M318 147.5 L312 153 L268 213 Q262.5 221 259.2 228.7 Q262.5 228.8 266.5 224.5 L269.5 221.5 Q270.2 224.5 272.5 224.2 Q274.8 222 274.6 218.2 L277.8 211 L310.5 175.4 L312.5 172 Z"/><g transform="translate(693.4 0) scale(-1 1)"><path d="M318 147.5 L312 153 L268 213 Q262.5 221 259.2 228.7 Q262.5 228.8 266.5 224.5 L269.5 221.5 Q270.2 224.5 272.5 224.2 Q274.8 222 274.6 218.2 L277.8 211 L310.5 175.4 L312.5 172 Z"/></g><path d="M323.00 232 L346.70 232 L346.70 238 Q344.50 250 343.20 260 Q341.50 275 340.80 285 Q339.30 300 339.30 321 Q338.80 330 340.00 336 Q342.50 341 342.30 349 L321.80 349 Q322.00 343 325.50 337 Q328.50 331 327.60 321 Q327.60 300 329.00 283 Q326.00 255 323.00 232Z"/><path d="M370.40 232 L346.70 232 L346.70 238 Q348.90 250 350.20 260 Q351.90 275 352.60 285 Q354.10 300 354.10 321 Q354.60 330 353.40 336 Q350.90 341 351.10 349 L371.60 349 Q371.40 343 367.90 337 Q364.90 331 365.80 321 Q365.80 300 364.40 283 Q367.40 255 370.40 232Z"/></g><path d="M346.5 24V430 M217 349.5H578" stroke="#b3b3b3" stroke-width="1"/><path d="M295 175.3 H310 M384 175.3 H400" stroke="#7f9cb8" stroke-width="0.7"/><rect x="321.3" y="129.5" width="51.2" height="2.4" fill="#fdfdfd" stroke="#777" stroke-width="0.3"/><path d="M321.3 128.6V132.8 M372.5 128.6V132.8" stroke="#444" stroke-width="0.7"/><path d="M328.3 129.2V132.2 M354.2 129.2V132.2" stroke="#7777bb" stroke-width="0.6"/><g fill="#e05a5a"><path d="M337.5 131.5 L338.8 128.6 L340.1 131.5Z"/><path d="M367.5 131.5 L368.8 128.6 L370.1 131.5Z"/></g><path d="M316.3 145.4 L334.2 138.3 Q334.5 151.3 346.7 151.3 Q359.2 151.3 359.6 138.5 L377.2 145 Q374.5 152 374.6 160 Q375 172 380.3 177.2 L382.8 232 L311.2 232 L309.4 177.2 Q318.5 172 318.8 160 Q318.8 152 316.3 145.4Z" fill="#ffffff" stroke="#4a4a4a" stroke-width="0.45"/><path d="M309.8 177.6 H380.2 M311.2 229.3 H382.8" stroke="#c4c4e6" stroke-width="0.5"/><path d="M346.7 151.3 V232" stroke="#33507e" stroke-width="0.85" stroke-dasharray="0.9 0.6"/><path d="M318.6 160.3 H322.6 M371.2 160.3 H375.2" stroke="#e84040" stroke-width="0.7"/><path d="M489.5 145.3 L507.1 138 Q514 142 521 142 Q528 142 534.5 138 L550.8 144.5 Q550 152 550.3 160 Q551 172 558 177.8 L556.7 230.7 L484.9 230.7 L483.5 177.8 Q490 172 490.4 160 Q490.5 152 489.5 145.3Z" fill="#ffffff" stroke="#4a4a4a" stroke-width="0.45"/><path d="M483.8 178.2 H557.8 M485 228.2 H556.8" stroke="#c4c4e6" stroke-width="0.5"/><path d="M521 142 V230.7" stroke="#33507e" stroke-width="0.85" stroke-dasharray="0.9 0.6"/><path d="M490.3 158 H494.5 M547 158 H551.2" stroke="#e84040" stroke-width="0.9"/><path d="M230.90 175.1 C238.00 171.2 245.50 166.5 252.00 162.2 C256.00 159.6 258.50 158.9 261.30 158.9 C264.10 158.9 266.60 159.6 270.60 162.2 C277.00 166.5 285.00 171.5 295.00 175.1 Q290.00 182 287.60 191.5 Q262.00 189.6 237.40 191.5 Q235.00 182 230.90 175.1Z" fill="#ffffff" stroke="#72a2d2" stroke-width="1.35" stroke-linejoin="round"/><path d="M231.50 175.3 H294.50 M261.30 159.5 V191 M236.50 187.6 Q262.00 186.6 288.50 187.6" stroke="#b4b4dc" stroke-width="0.45" fill="none"/><circle cx="237.60" cy="191.3" r="0.6" fill="#333"/><circle cx="287.40" cy="191.3" r="0.6" fill="#333"/><path d="M260.30 160.6 L261.30 163 L262.30 160.6 M250.50 163.5 L251.80 166.2 M251.60 163.2 L252.90 165.9 M274.80 165.6 L273.60 168.2" stroke="#e84040" stroke-width="0.55" fill="none"/><g transform="translate(694.9 0) scale(-1 1)"><path d="M230.90 175.1 C238.00 171.2 245.50 166.5 252.00 162.2 C256.00 159.6 258.50 158.9 261.30 158.9 C264.10 158.9 266.60 159.6 270.60 162.2 C277.00 166.5 285.00 171.5 295.00 175.1 Q290.00 182 287.60 191.5 Q262.00 189.6 237.40 191.5 Q235.00 182 230.90 175.1Z" fill="#ffffff" stroke="#72a2d2" stroke-width="1.35" stroke-linejoin="round"/><path d="M231.50 175.3 H294.50 M261.30 159.5 V191 M236.50 187.6 Q262.00 186.6 288.50 187.6" stroke="#b4b4dc" stroke-width="0.45" fill="none"/><circle cx="237.60" cy="191.3" r="0.6" fill="#333"/><circle cx="287.40" cy="191.3" r="0.6" fill="#333"/><path d="M260.30 160.6 L261.30 163 L262.30 160.6 M250.50 163.5 L251.80 166.2 M251.60 163.2 L252.90 165.9 M274.80 165.6 L273.60 168.2" stroke="#e84040" stroke-width="0.55" fill="none"/></g></svg>
<div class="a" style="left:217px;top:24px;width:361px;height:406px;border-top:1px solid #e0e0e0;border-right:1px solid #d4d4d4;border-bottom:1px solid #e4e4e4;border-left:1px solid #d2d2d2"></div>
<div class="a" style="left:222px;top:28.5px;width:11.8px;height:60px;border-radius:2.6px;background:#4a4a4d"></div>
<svg style="left:223.35px;top:31.55px" width="8.5" height="8.5" viewBox="0 0 10 10"><path d="M1.2 8.8 L7.5 2.5" stroke="#d8d8d8" stroke-width="0.9"/><path d="M7.2 2.2 L8.8 1.2 L9 4.5" stroke="#3a8fe0" stroke-width="0.9" fill="none"/></svg>
<svg style="left:223.35px;top:43.35px" width="8.5" height="8.5" viewBox="0 0 10 10"><path d="M1 3.2 L3.5 1.6 Q5 2.6 6.5 1.6 L9 3.2 L8 5.2 L7 4.8 V8.8 H3 V4.8 L2 5.2Z" fill="#f0f0f0"/></svg>
<svg style="left:223.35px;top:55.25px" width="8.5" height="8.5" viewBox="0 0 10 10"><circle cx="5" cy="5" r="3.8" fill="#e8e8e8"/><path d="M5 4.2 V7.5" stroke="#2f7fd8" stroke-width="1.1"/><circle cx="5" cy="2.8" r="0.6" fill="#2f7fd8"/></svg>
<svg style="left:223.35px;top:66.25px" width="8.5" height="8.5" viewBox="0 0 10 10"><path d="M3 3 Q6 2 8.5 1.5 L7.5 7 Q5 7.5 2.5 8Z" fill="#2f8ae0"/><path d="M1.5 5 V8.8 H5" stroke="#ddd" stroke-width="0.8" fill="none"/></svg>
<svg style="left:223.35px;top:77.25px" width="8.5" height="8.5" viewBox="0 0 10 10"><path d="M1 3.2 L3.5 1.6 Q5 2.6 6.5 1.6 L9 3.2 L8 5.2 L7 4.8 V8.8 H3 V4.8 L2 5.2Z" fill="#eeeeee"/><path d="M1.5 8.8 L4.5 5.5" stroke="#2f7fd8" stroke-width="1.2"/></svg>
<div class="a" style="left:578px;top:24px;width:29px;height:406px;background:#242427"></div>
<div class="a" style="left:592px;top:24px;width:1px;height:406px;background:#2b2b2d"></div><div class="a" style="left:578px;top:24px;width:1px;height:406px;background:#1e1e20"></div>
<div class="a" style="left:579.5px;top:27.4px;width:11px;height:0.6px;background:#1b1b1d"></div>
<div class="a" style="left:579.5px;top:66px;width:11px;height:0.6px;background:#1b1b1d"></div>
<div class="a" style="left:579.5px;top:91px;width:11px;height:0.6px;background:#1b1b1d"></div>
<div class="a" style="left:579.5px;top:116px;width:11px;height:0.6px;background:#1b1b1d"></div>
<div class="a" style="left:579.5px;top:147px;width:11px;height:0.6px;background:#1b1b1d"></div>
<div class="a" style="left:579.5px;top:162px;width:11px;height:0.6px;background:#1b1b1d"></div>
<div class="a" style="left:579.5px;top:177px;width:11px;height:0.6px;background:#1b1b1d"></div>
<div class="a" style="left:579.5px;top:193px;width:11px;height:0.6px;background:#1b1b1d"></div>
<div class="a" style="left:579.5px;top:224px;width:11px;height:0.6px;background:#1b1b1d"></div>
<div class="a" style="left:579.5px;top:244px;width:11px;height:0.6px;background:#1b1b1d"></div>
<div class="a" style="left:579.5px;top:272px;width:11px;height:0.6px;background:#1b1b1d"></div>
<div class="a" style="left:594px;top:27.4px;width:11px;height:0.6px;background:#1b1b1d"></div>
<div class="a" style="left:594px;top:80px;width:11px;height:0.6px;background:#1b1b1d"></div>
<div class="a" style="left:594px;top:100px;width:11px;height:0.6px;background:#1b1b1d"></div>
<div class="a" style="left:594px;top:119px;width:11px;height:0.6px;background:#1b1b1d"></div>
<div class="a" style="left:594px;top:162px;width:11px;height:0.6px;background:#1b1b1d"></div>
<div class="a" style="left:594px;top:193px;width:11px;height:0.6px;background:#1b1b1d"></div>
<div class="a" style="left:594px;top:224px;width:11px;height:0.6px;background:#1b1b1d"></div>
<div class="a" style="left:594px;top:244px;width:11px;height:0.6px;background:#1b1b1d"></div>
<div class="a" style="left:579px;top:31px;width:12.5px;height:10.6px;border-radius:1.5px;background:#131315"></div>
<svg style="left:580.30px;top:31.40px;filter:brightness(1.22)" width="10" height="10" viewBox="0 0 10 10"><path d="M2 8.5 L8.5 2 V8.5Z" fill="#2f7fd8"/><path d="M0.4 0.4 L2.2 1.4 L0.4 2.4 Z" fill="#e0e0e0"/></svg>
<svg style="left:580.30px;top:43.80px;filter:brightness(1.22)" width="10" height="10" viewBox="0 0 10 10"><path d="M2 8 L7.5 2.5 V8Z" fill="none" stroke="#bbb" stroke-width="0.6"/><circle cx="8" cy="8" r="0.8" fill="#ccc"/><path d="M0.4 0.4 L2.2 1.4 L0.4 2.4 Z" fill="#e0e0e0"/></svg>
<svg style="left:580.30px;top:55.00px;filter:brightness(1.22)" width="10" height="10" viewBox="0 0 10 10"><path d="M2.5 2 H5 L8 5 L5 8 H2.5Z" fill="#9c9c9c"/><path d="M5 2 L8 5 L5 8" fill="none" stroke="#ddd" stroke-width="0.6"/><path d="M9.5 8 V9.5 H8 Z" fill="#d0d0d0"/></svg>
<svg style="left:580.30px;top:67.40px;filter:brightness(1.22)" width="10" height="10" viewBox="0 0 10 10"><path d="M1.5 8 V2.5 H4.5 L8 5 V8Z" fill="#9d9d9d"/><path d="M9.5 8 V9.5 H8 Z" fill="#d0d0d0"/></svg>
<svg style="left:580.30px;top:79.80px;filter:brightness(1.22)" width="10" height="10" viewBox="0 0 10 10"><path d="M1.5 2 H8 V7.5 H1.5Z" fill="#9f9f9f"/><path d="M2 2.5 L4 4" stroke="#ccc" stroke-width="0.5"/><path d="M9.5 8 V9.5 H8 Z" fill="#d0d0d0"/></svg>
<svg style="left:580.30px;top:92.20px;filter:brightness(1.22)" width="10" height="10" viewBox="0 0 10 10"><path d="M1.5 2 H8 V7.5 H1.5Z" fill="#9f9f9f"/><path d="M2 2.5 L4 4" stroke="#ccc" stroke-width="0.5"/><path d="M9.5 8 V9.5 H8 Z" fill="#d0d0d0"/></svg>
<svg style="left:580.30px;top:104.60px;filter:brightness(1.22)" width="10" height="10" viewBox="0 0 10 10"><path d="M2 2.5 H5 V8 H2Z" fill="#aaa"/><path d="M5 3 L8 2.5 V8 L5 7.5Z" fill="#888"/></svg>
<svg style="left:580.30px;top:117.90px;filter:brightness(1.22)" width="10" height="10" viewBox="0 0 10 10"><path d="M2 2 L8 8 M8 2 L2 8" stroke="#bbb" stroke-width="0.6"/><path d="M0.4 0.4 L2.2 1.4 L0.4 2.4 Z" fill="#e0e0e0"/></svg>
<svg style="left:580.30px;top:130.30px;filter:brightness(1.22)" width="10" height="10" viewBox="0 0 10 10"><path d="M2.5 8.5 V4 L4.5 2 H6.5 V4 L7.5 5 V8.5Z" fill="none" stroke="#ddd" stroke-width="0.7"/><path d="M0.4 0.4 L2.2 1.4 L0.4 2.4 Z" fill="#e0e0e0"/></svg>
<svg style="left:580.30px;top:148.30px;filter:brightness(1.22)" width="10" height="10" viewBox="0 0 10 10"><path d="M2 2.5 H5 V8 H2Z" fill="#aaa"/><path d="M5 3 L8 2.5 V8 L5 7.5Z" fill="#888"/></svg>
<svg style="left:580.30px;top:165.20px;filter:brightness(1.22)" width="10" height="10" viewBox="0 0 10 10"><path d="M3 2 H7.5 V8 H3Z" fill="#8a8a8a"/><path d="M3 2 V8 M7.5 2 V8" stroke="#ccc" stroke-width="0.5"/><path d="M0.4 0.4 L2.2 1.4 L0.4 2.4 Z" fill="#e0e0e0"/></svg>
<svg style="left:580.30px;top:178.70px;filter:brightness(1.22)" width="10" height="10" viewBox="0 0 10 10"><path d="M1.5 2.5 H8.5" stroke="#ccc" stroke-width="0.5"/><rect x="1.5" y="4" width="7" height="3.5" fill="#8a8a8a"/></svg>
<svg style="left:580.30px;top:196.70px;filter:brightness(1.22)" width="10" height="10" viewBox="0 0 10 10"><text x="5" y="8.8" text-anchor="middle" font-family="Liberation Serif" font-size="9.5" fill="#dcdcdc">A</text><path d="M0.4 0.4 L2.2 1.4 L0.4 2.4 Z" fill="#e0e0e0"/></svg>
<svg style="left:580.30px;top:211.30px;filter:brightness(1.22)" width="10" height="10" viewBox="0 0 10 10"><text x="5" y="8.8" text-anchor="middle" font-family="Liberation Serif" font-size="9.5" fill="#dcdcdc">A</text><path d="M9.5 8 V9.5 H8 Z" fill="#d0d0d0"/></svg>
<svg style="left:580.30px;top:228.20px;filter:brightness(1.22)" width="10" height="10" viewBox="0 0 10 10"><path d="M2 2.5 V8 M3.8 2.5 V8 M5.6 2.5 V8 M7.4 2.5 V8" stroke="#777" stroke-width="0.6"/><path d="M9.5 8 V9.5 H8 Z" fill="#d0d0d0"/></svg>
<svg style="left:580.30px;top:247.30px;filter:brightness(1.22)" width="10" height="10" viewBox="0 0 10 10"><path d="M3 4 L6.5 7.5" stroke="#bbb" stroke-width="1.8"/><path d="M5 6 L8 8.5" stroke="#ddd" stroke-width="0.8"/><path d="M0.4 0.4 L2.2 1.4 L0.4 2.4 Z" fill="#e0e0e0"/><path d="M9.5 8 V9.5 H8 Z" fill="#d0d0d0"/></svg>
<svg style="left:580.30px;top:259.70px;filter:brightness(1.22)" width="10" height="10" viewBox="0 0 10 10"><path d="M2 5 H8 V8.5 H2Z" fill="#a0a0a0"/><path d="M3.5 1.5 V5" stroke="#ccc" stroke-width="0.5"/></svg>
<svg style="left:595.00px;top:31.40px;filter:brightness(1.22)" width="10" height="10" viewBox="0 0 10 10"><path d="M2.5 3 H7.5 V7 H5.5 V5.5 H4 V7 H2.5Z" fill="#a0a0a0"/><path d="M2 8.3 H8" stroke="#ccc" stroke-width="0.5"/><path d="M0.4 0.4 L2.2 1.4 L0.4 2.4 Z" fill="#e0e0e0"/></svg>
<svg style="left:595.00px;top:43.80px;filter:brightness(1.22)" width="10" height="10" viewBox="0 0 10 10"><path d="M2.5 3 H7.5 V7 H5.5 V5.5 H4 V7 H2.5Z" fill="#a0a0a0"/><path d="M2 8.3 H8" stroke="#ccc" stroke-width="0.5"/><path d="M9.5 8 V9.5 H8 Z" fill="#d0d0d0"/></svg>
<svg style="left:595.00px;top:55.00px;filter:brightness(1.22)" width="10" height="10" viewBox="0 0 10 10"><path d="M2.5 3 H7.5 V7 H5.5 V5.5 H4 V7 H2.5Z" fill="#a0a0a0"/><path d="M2 8.3 H8" stroke="#ccc" stroke-width="0.5"/><path d="M9.5 8 V9.5 H8 Z" fill="#d0d0d0"/></svg>
<svg style="left:595.00px;top:66.30px;filter:brightness(1.22)" width="10" height="10" viewBox="0 0 10 10"><path d="M2.5 3 H7.5 V7 H5.5 V5.5 H4 V7 H2.5Z" fill="#a0a0a0"/><path d="M2 8.3 H8" stroke="#ccc" stroke-width="0.5"/><path d="M0.4 0.4 L2.2 1.4 L0.4 2.4 Z" fill="#e0e0e0"/></svg>
<svg style="left:595.00px;top:85.40px;filter:brightness(1.22)" width="10" height="10" viewBox="0 0 10 10"><path d="M1.5 7.5 Q2 3.5 6 3 Q8 3 8.5 5 V7.5Z" fill="#999"/><path d="M1.5 7.5 H8.5" stroke="#555" stroke-width="0.5"/></svg>
<svg style="left:595.00px;top:104.60px;filter:brightness(1.22)" width="10" height="10" viewBox="0 0 10 10"><path d="M1.2 3.2 L3.5 1.8 Q5 2.8 6.5 1.8 L8.8 3.2 L7.8 5 L7 4.6 V8.5 H3 V4.6 L2.2 5Z" fill="#aaa"/><path d="M0.4 0.4 L2.2 1.4 L0.4 2.4 Z" fill="#e0e0e0"/></svg>
<svg style="left:595.00px;top:123.50px;filter:brightness(1.22)" width="10" height="10" viewBox="0 0 10 10"><path d="M2.5 8 L4 3.5 L7 2 L8 6 L6.5 8Z" fill="#b8b8b8"/><path d="M0.4 0.4 L2.2 1.4 L0.4 2.4 Z" fill="#e0e0e0"/></svg>
<svg style="left:595.00px;top:135.90px;filter:brightness(1.22)" width="10" height="10" viewBox="0 0 10 10"><path d="M1.2 3.2 L3.5 1.8 Q5 2.8 6.5 1.8 L8.8 3.2 L7.8 5 L7 4.6 V8.5 H3 V4.6 L2.2 5Z" fill="#a9a9a9"/><path d="M3 4.5 L7 7.5 M7 4.5 L3 7.5" stroke="#777" stroke-width="0.5"/><path d="M0.4 0.4 L2.2 1.4 L0.4 2.4 Z" fill="#e0e0e0"/></svg>
<svg style="left:595.00px;top:148.30px;filter:brightness(1.22)" width="10" height="10" viewBox="0 0 10 10"><path d="M1.2 3.2 L3.5 1.8 Q5 2.8 6.5 1.8 L8.8 3.2 L7.8 5 L7 4.6 V8.5 H3 V4.6 L2.2 5Z" fill="#a9a9a9"/><path d="M3 4.5 L7 7.5 M7 4.5 L3 7.5" stroke="#777" stroke-width="0.5"/></svg>
<svg style="left:595.00px;top:165.20px;filter:brightness(1.22)" width="10" height="10" viewBox="0 0 10 10"><path d="M2 8 L8 2" stroke="#ccc" stroke-width="0.7" stroke-dasharray="1 0.6"/><path d="M0.4 0.4 L2.2 1.4 L0.4 2.4 Z" fill="#e0e0e0"/></svg>
<svg style="left:595.00px;top:179.80px;filter:brightness(1.22)" width="10" height="10" viewBox="0 0 10 10"><path d="M1.5 3 H8.5 M1.5 5.5 H8.5" stroke="#bbb" stroke-width="0.6" stroke-dasharray="1 0.5"/><path d="M7 8 L8.5 6.8" stroke="#ccc" stroke-width="0.5"/></svg>
<svg style="left:595.00px;top:196.70px;filter:brightness(1.22)" width="10" height="10" viewBox="0 0 10 10"><path d="M5 1.5 V8.5" stroke="#ccc" stroke-width="0.5"/><path d="M3 2.5 H7 L3 4 H7 L3 5.5 H7 L3 7 H7" fill="none" stroke="#bbb" stroke-width="0.5"/><path d="M0.4 0.4 L2.2 1.4 L0.4 2.4 Z" fill="#e0e0e0"/></svg>
<svg style="left:595.00px;top:211.30px;filter:brightness(1.22)" width="10" height="10" viewBox="0 0 10 10"><path d="M1.5 3 L2.5 2 L3.5 3 L4.5 2 L5.5 3 L6.5 2 L7.5 3 L8.5 2" fill="none" stroke="#bbb" stroke-width="0.5"/><path d="M1.5 5.5 H8.5" stroke="#aaa" stroke-width="0.5" stroke-dasharray="0.8 0.5"/></svg>
<svg style="left:595.00px;top:228.20px;filter:brightness(1.22)" width="10" height="10" viewBox="0 0 10 10"><path d="M1.5 5 L6 3 L8.5 4 V6 L4 8 Z" fill="#9c9c9c"/></svg>
<svg style="left:595.00px;top:247.30px;filter:brightness(1.22)" width="10" height="10" viewBox="0 0 10 10"><ellipse cx="5" cy="5" rx="3" ry="3.3" fill="#9a9a9a"/><path d="M2 4 H8 M2 6 H8" stroke="#333" stroke-width="0.5"/></svg>
<div class="a" style="left:607px;top:16px;width:2px;height:414px;background:#161618"></div>
<div class="a" style="left:609px;top:16px;width:132px;height:8px;background:#1f1f21"></div>
<svg style="left:610.3px;top:18.3px" width="4.5" height="4.5" viewBox="0 0 5 5"><path d="M2.5 0.3 L3.2 1.8 L4.7 2.5 L3.2 3.2 L2.5 4.7 L1.8 3.2 L0.3 2.5 L1.8 1.8Z" fill="#e8e8e8"/></svg>
<div class="t" style="left:658.3px;top:18.2px;font-size:4.9px">Object Browser</div>
<svg style="left:734.5px;top:18.2px" width="5" height="5" viewBox="0 0 5 5"><path d="M0.6 1.8 H3.2 V4.4 H0.6Z M1.8 1.8 V0.6 H4.4 V3.2 H3.2" fill="none" stroke="#a8a8a8" stroke-width="0.55"/></svg>
<div class="a" style="left:609px;top:24px;width:132px;height:267px;background:#252527"></div>

<div class="a" style="left:609px;top:291px;width:132px;height:2px;background:#171719"></div>
<div class="a" style="left:609px;top:293px;width:132px;height:8px;background:#1e1e20"></div>
<svg style="left:610.3px;top:294.6px" width="4.5" height="4.5" viewBox="0 0 5 5"><path d="M2.5 0.3 L3.2 1.8 L4.7 2.5 L3.2 3.2 L2.5 4.7 L1.8 3.2 L0.3 2.5 L1.8 1.8Z" fill="#e8e8e8"/></svg>
<div class="t" style="left:658.3px;top:294px;font-size:5px">Property Editor</div>
<svg style="left:734.5px;top:294.3px" width="5" height="5" viewBox="0 0 5 5"><path d="M0.6 1.8 H3.2 V4.4 H0.6Z M1.8 1.8 V0.6 H4.4 V3.2 H3.2" fill="none" stroke="#a8a8a8" stroke-width="0.55"/></svg>
<div class="a" style="left:609px;top:301px;width:132px;height:129px;background:#252527"></div>
<div class="a" style="left:741px;top:16px;width:2px;height:414px;background:#19191b"></div>
<div class="a" style="left:0;top:430px;width:743px;height:12px;background:#19191b"></div>
<div class="a" style="left:14px;top:430px;width:593px;height:1px;background:#111113"></div>
<div class="t" style="left:5.5px;top:432.5px;font-size:4.65px;color:#b8b8b8">Version: 2024.2.214 (r52882)</div>
<div class="a" style="left:0;top:442px;width:743px;height:1px;background:#1f2b33"></div>
<svg style="left:700.5px;top:433.3px" width="6.5" height="4.6" viewBox="0 0 6.5 4.6"><rect x="0.3" y="0.3" width="5.9" height="4" fill="none" stroke="#bdbdbd" stroke-width="0.6"/><path d="M3.25 0.3 V4.3 M1.8 0.3V4.3" stroke="#bdbdbd" stroke-width="0.5"/></svg>
<div class="a" style="left:710px;top:433.3px;width:6.2px;height:4.5px;background:#d8d8d8;border-radius:0.5px"></div><div class="a" style="left:711.5px;top:434.8px;width:3.2px;height:1px;background:#555"></div>
<div class="a" style="left:719px;top:433.3px;width:6.2px;height:4.5px;background:#d8d8d8;border-radius:0.5px"></div><svg style="left:719px;top:433.3px" width="6.2" height="4.5" viewBox="0 0 6.2 4.5"><path d="M1 3.5 L2.5 2 L3.5 2.8 L5 1.2" stroke="#555" stroke-width="0.5" fill="none"/></svg>
<div class="a" style="left:727px;top:432px;width:0.5px;height:7px;background:#2a2a2c"></div>
<svg style="left:729.8px;top:432.8px" width="5.5" height="5.5" viewBox="0 0 5.5 5.5"><path d="M4.2 1.5 A2.1 2.1 0 1 0 4.6 3.4" fill="none" stroke="#cfcfcf" stroke-width="0.8"/><circle cx="4.5" cy="1.5" r="0.9" fill="#e0e0e0"/></svg>
<svg style="left:611.80px;top:25px" width="7.6" height="7.6" viewBox="0 0 10 10"><path d="M3 2 H9.5 M3 5 H9.5 M3 8 H9.5 M0.5 2 H1.8 M0.5 5 H1.8 M0.5 8 H1.8" stroke="#d0d0d0" stroke-width="1.2"/></svg>
<svg style="left:625.60px;top:25px" width="7.6" height="7.6" viewBox="0 0 10 10"><path d="M2.5 3 Q5 1.5 8.5 2 L7.5 8 Q5 8.5 1.5 8.5Z" fill="#3d8de0"/></svg>
<svg style="left:638.70px;top:25px" width="7.6" height="7.6" viewBox="0 0 10 10"><rect x="1.2" y="1.2" width="7.6" height="7.6" fill="none" stroke="#ccc" stroke-width="0.8"/><path d="M1.2 3.5H8.8M1.2 6.2H8.8M3.5 1.2V8.8M6.2 1.2V8.8" stroke="#ccc" stroke-width="0.7"/></svg>
<svg style="left:651.40px;top:25px" width="7.6" height="7.6" viewBox="0 0 10 10"><circle cx="5" cy="5" r="3.7" fill="#d8d8d8"/><path d="M5 1.3 V8.7 M3.2 2 V8 M6.8 2 V8" stroke="#333" stroke-width="0.6"/></svg>
<svg style="left:664.50px;top:25px" width="7.6" height="7.6" viewBox="0 0 10 10"><path d="M1 5 H9" stroke="#ccc" stroke-width="1.2"/><path d="M1 5 H3" stroke="#eee" stroke-width="1.6"/></svg>
<svg style="left:677.70px;top:25px" width="7.6" height="7.6" viewBox="0 0 10 10"><path d="M1.5 8.5 L8.5 1.5" stroke="#ccc" stroke-width="0.8"/><circle cx="1.6" cy="8.4" r="0.9" fill="#ccc"/><circle cx="8.4" cy="1.6" r="0.9" fill="#ccc"/></svg>
<svg style="left:690.80px;top:25px" width="7.6" height="7.6" viewBox="0 0 10 10"><path d="M2 8 L8 2" stroke="#ccc" stroke-width="1.6" stroke-dasharray="1.2 0.6"/></svg>
<svg style="left:704.10px;top:25px" width="7.6" height="7.6" viewBox="0 0 10 10"><path d="M1.5 1.5H8.5V5H1.5Z" fill="#ccc"/><path d="M3 5 V9 M7 5 V9 M1.5 9 H8.5" stroke="#ccc" stroke-width="0.8"/><path d="M5 1.5 V5" stroke="#333" stroke-width="0.6"/></svg>
<svg style="left:717.10px;top:25px" width="7.6" height="7.6" viewBox="0 0 10 10"><path d="M1.5 9 V3 L5 1 V9Z" fill="#ccc"/><path d="M5.5 3 H8.5 V9 H5.5Z" fill="none" stroke="#ccc" stroke-width="0.7"/></svg>
<svg style="left:730.40px;top:25px" width="7.6" height="7.6" viewBox="0 0 10 10"><rect x="1" y="3" width="8.5" height="4" rx="0.8" fill="#ccc"/></svg>
<div class="a" style="left:622.7px;top:34.6px;width:13px;height:0.9px;background:#3d8de0"></div>
<div class="a" style="left:609px;top:35.3px;width:132px;height:1px;background:#1b1b1d"></div>
<svg style="left:613.5px;top:44px" width="6" height="6" viewBox="0 0 6 6"><path d="M3 0.6 L5.6 5.2 H0.4Z" fill="#2aa07a"/><path d="M1.2 4.2 H4.8 L5.6 5.2 H0.4Z" fill="#3a7fd0"/><path d="M2.2 3 H3.8" stroke="#1b1b1d" stroke-width="0.5"/></svg>
<svg style="left:655.5px;top:44px" width="6" height="6" viewBox="0 0 6 6"><path d="M0.5 1 H2 L2.5 0.3 H3.5 L4 1 H5.5 V5.5 H0.5Z" fill="#cfcfcf"/><rect x="2" y="2.5" width="2" height="2" fill="#333"/></svg>
<div class="t" style="left:667.6px;top:44.2px;font-size:5px;color:#d0d0d0">+ Add</div>
<svg style="left:688.5px;top:44.5px" width="5" height="5" viewBox="0 0 5 5"><path d="M0.5 1.5 H3.5 V4.5 H0.5Z M1.5 1.5 V0.5 H4.5 V3.5 H3.5" fill="none" stroke="#5a5a5a" stroke-width="0.6"/></svg>
<div class="t" style="left:695.6px;top:44.2px;font-size:5px;color:#5c5c5e">Copy</div>
<svg style="left:716.5px;top:44.5px" width="5" height="5" viewBox="0 0 5 5"><path d="M0.5 1.5 V4.5 H3.5 M1.5 3.5 L4.5 0.5" fill="none" stroke="#5a5a5a" stroke-width="0.6"/></svg>
<div class="t" style="left:723.4px;top:44.2px;font-size:5px;color:#5c5c5e">Assign</div>
<div class="a" style="left:613px;top:55.6px;width:126.7px;height:7.6px;background:#1c1c1e"></div>
<svg style="left:617.2px;top:58.3px" width="3" height="2.5" viewBox="0 0 3 2.5"><path d="M0 0 H3 L1.5 2.2Z" fill="#ccc"/></svg>
<div class="t" style="left:658.8px;top:56.3px;font-size:5px;color:#d0d0d0">Primary</div>
<svg style="left:681.5px;top:56.8px" width="5" height="5" viewBox="0 0 5 5"><path d="M0.6 4.4 L4 1" stroke="#ddd" stroke-width="1.1"/></svg>
<svg style="left:718.5px;top:56.8px" width="5" height="5" viewBox="0 0 5 5"><path d="M2.5 0.4 V4.6 M0.4 2.5 H4.6" stroke="#ccc" stroke-width="0.8"/></svg>
<svg style="left:726.5px;top:56.8px" width="5" height="5" viewBox="0 0 5 5"><path d="M0.3 1 H2 L2.6 1.6 H4.7 V4.6 H0.3Z" fill="#e0e0e0"/></svg>
<svg style="left:614.8px;top:68.8px" width="5" height="5" viewBox="0 0 5 5"><path d="M0.5 2.6 L1.9 4 L4.5 1" fill="none" stroke="#3d8de0" stroke-width="0.9"/></svg>
<div class="a" style="left:622px;top:63.9px;width:14.2px;height:14.3px;background:#ffffff"></div>
<div class="t" style="left:639.3px;top:69px;font-size:4.6px;color:#d0d0d0">FABRIC 1</div>
<div class="a" style="left:713.1px;top:68.7px;width:4.6px;height:4.6px;border:0.6px solid #bbb;border-radius:0.6px"></div>
<div class="a" style="left:720.7px;top:68.7px;width:4.6px;height:4.6px;border:0.6px solid #bbb;border-radius:0.6px"></div>
<div class="a" style="left:728.7px;top:68.7px;width:4.6px;height:4.6px;border:0.6px solid #bbb;border-radius:0.6px"></div>
<div class="a" style="left:615.6px;top:79.5px;width:119px;height:0.5px;background:#3a3a3c"></div>
</body></html>
